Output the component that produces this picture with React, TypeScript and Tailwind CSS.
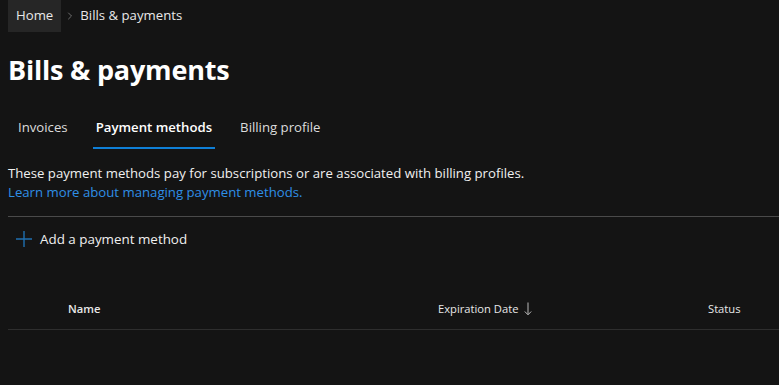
import { ChevronRight } from 'lucide-react'

const tabs = ['Invoices', 'Payment methods', 'Billing profile']

export default function App() {
  return (
    <div
      className="h-[385px] w-[779px] overflow-hidden bg-[#141414] text-white"
      style={{ fontFamily: '"Open Sans", "Noto Sans", sans-serif' }}
    >
      {/* breadcrumb */}
      <div className="flex h-8 items-center pl-2 text-[13.2px] text-[#e8e8e8]">
        <span className="flex h-8 items-center bg-[#262626] px-2">Home</span>
        <ChevronRight className="mx-[3px] h-3 w-3 text-[#8a8a8a]" strokeWidth={1.5} />
        <span className="ml-[1px]">Bills &amp; payments</span>
      </div>

      {/* title */}
      <h1 className="mt-[19px] pl-2 text-[27px] font-bold leading-[38px] tracking-[-0.2px]">
        Bills &amp; payments
      </h1>

      {/* tabs */}
      <div className="mt-[17px] flex pl-2 text-[13.2px]">
        {tabs.map((t, i) => (
          <div
            key={t}
            className={`mx-[7px] flex h-[43px] items-center px-[3px] pt-[2px] ${i === 0 ? '' : 'ml-[15px]'} ${
              i === 1 ? 'border-b-2 border-[#0f7fd6] font-semibold text-white' : 'border-b-2 border-transparent text-[#dcdcdc]'
            }`}
          >
            {t}
          </div>
        ))}
      </div>

      {/* description */}
      <div className="mt-[15px] pl-2 text-[13.2px] leading-[19px]">
        <p className="text-[#f0f0f0]">These payment methods pay for subscriptions or are associated with billing profiles.</p>
        <a className="text-[#2f8fe6]">Learn more about managing payment methods.</a>
      </div>

      <div className="ml-2 mt-[14px] h-px bg-[#4a4a4a]" />

      {/* add */}
      <div className="flex h-[44px] items-center pl-4 text-[13.4px] text-[#f0f0f0]">
        <svg width="16" height="16" viewBox="0 0 16 16" className="mr-[8px]">
          <path d="M8 0v16M0 8h16" stroke="#1f6fb0" strokeWidth="1.4" />
        </svg>
        Add a payment method
      </div>

      {/* table header */}
      <div className="mt-[28px] flex h-[40px] items-center text-[11.2px] text-[#e8e8e8]">
        <div className="w-[438px] pl-[68px] font-semibold">Name</div>
        <div className="flex w-[270px] items-center">
          Expiration Date
          <svg width="8" height="14" viewBox="0 0 8 14" className="ml-[6px]">
            <path d="M4 0.5v12M0.8 9.5L4 12.8 7.2 9.5" fill="none" stroke="#b8b8b8" strokeWidth="1" />
          </svg>
        </div>
        <div>Status</div>
      </div>
      <div className="ml-2 h-px bg-[#2e2e2e]" />
    </div>
  )
}
